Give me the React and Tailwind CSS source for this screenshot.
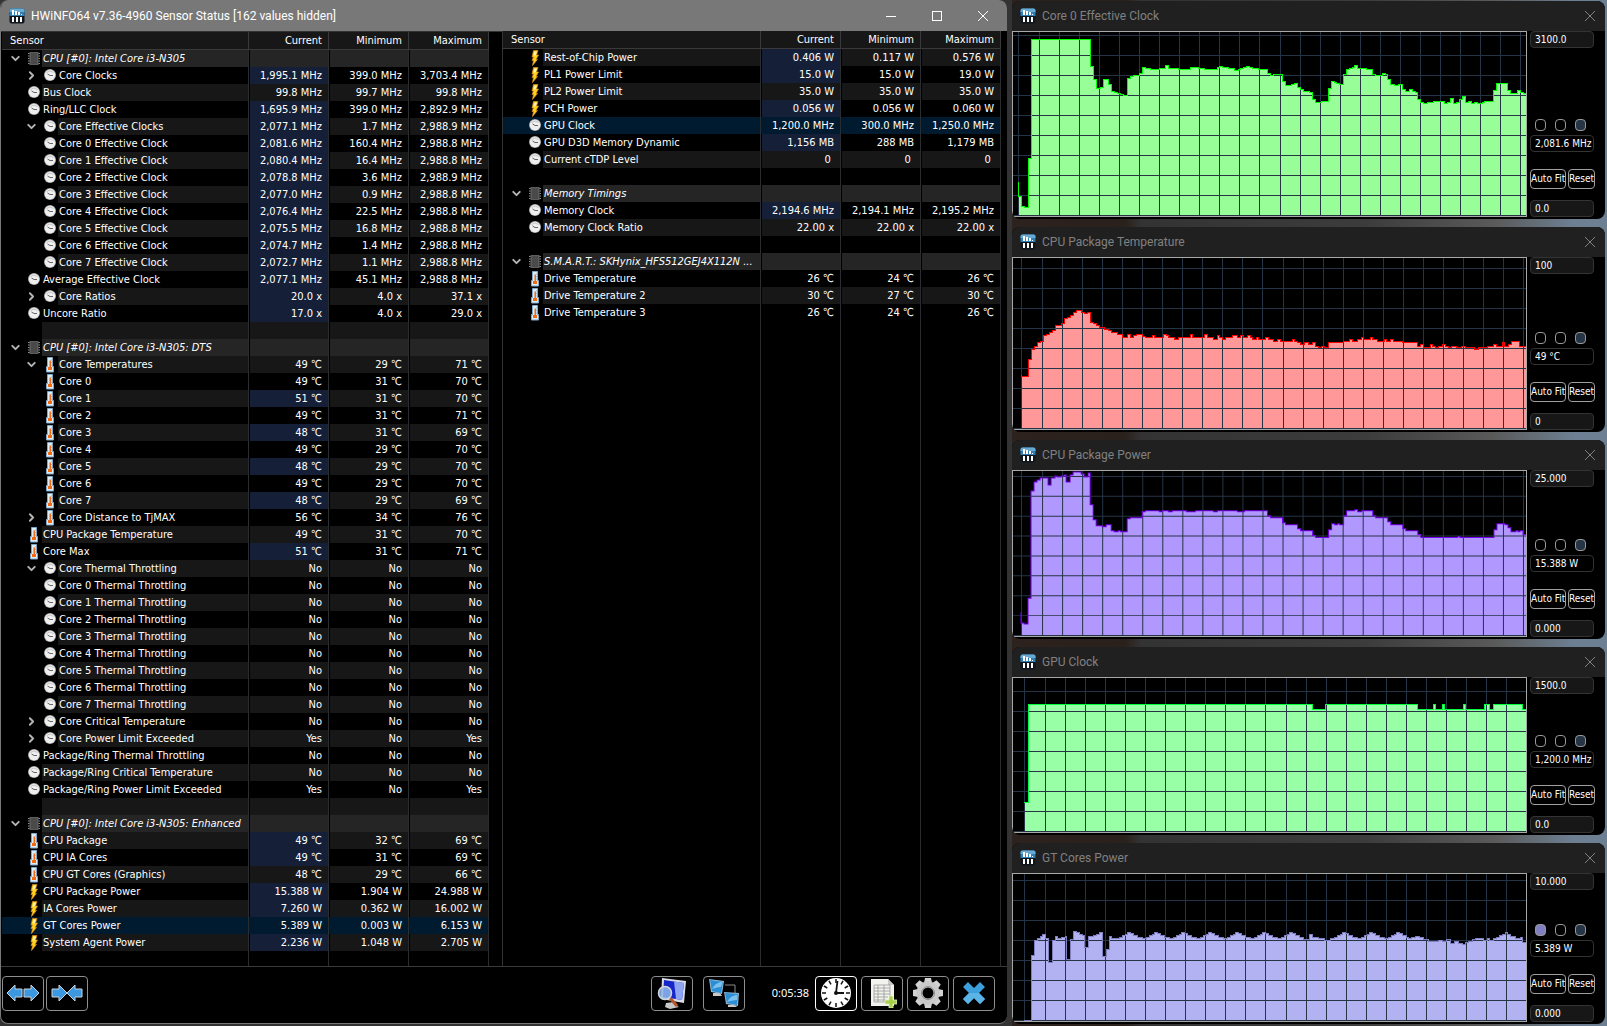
import { ChevronDown, ChevronRight } from "lucide-react";

// icon, label, current, minimum, maximum, options
const leftRows = [
  { head: true, label: "CPU [#0]: Intel Core i3-N305" },
  { icon: "clock", sub: true, arrow: "closed", hot: true, label: "Core Clocks", v: ["1,995.1 MHz", "399.0 MHz", "3,703.4 MHz"] },
  { icon: "clock", label: "Bus Clock", v: ["99.8 MHz", "99.7 MHz", "99.8 MHz"] },
  { icon: "clock", hot: true, label: "Ring/LLC Clock", v: ["1,695.9 MHz", "399.0 MHz", "2,892.9 MHz"] },
  { icon: "clock", sub: true, arrow: "open", hot: true, label: "Core Effective Clocks", v: ["2,077.1 MHz", "1.7 MHz", "2,988.9 MHz"] },
  { icon: "clock", sub: true, hot: true, label: "Core 0 Effective Clock", v: ["2,081.6 MHz", "160.4 MHz", "2,988.8 MHz"] },
  { icon: "clock", sub: true, hot: true, label: "Core 1 Effective Clock", v: ["2,080.4 MHz", "16.4 MHz", "2,988.8 MHz"] },
  { icon: "clock", sub: true, hot: true, label: "Core 2 Effective Clock", v: ["2,078.8 MHz", "3.6 MHz", "2,988.9 MHz"] },
  { icon: "clock", sub: true, hot: true, label: "Core 3 Effective Clock", v: ["2,077.0 MHz", "0.9 MHz", "2,988.8 MHz"] },
  { icon: "clock", sub: true, hot: true, label: "Core 4 Effective Clock", v: ["2,076.4 MHz", "22.5 MHz", "2,988.8 MHz"] },
  { icon: "clock", sub: true, hot: true, label: "Core 5 Effective Clock", v: ["2,075.5 MHz", "16.8 MHz", "2,988.8 MHz"] },
  { icon: "clock", sub: true, hot: true, label: "Core 6 Effective Clock", v: ["2,074.7 MHz", "1.4 MHz", "2,988.8 MHz"] },
  { icon: "clock", sub: true, hot: true, label: "Core 7 Effective Clock", v: ["2,072.7 MHz", "1.1 MHz", "2,988.8 MHz"] },
  { icon: "clock", hot: true, label: "Average Effective Clock", v: ["2,077.1 MHz", "45.1 MHz", "2,988.8 MHz"] },
  { icon: "clock", sub: true, arrow: "closed", hot: true, label: "Core Ratios", v: ["20.0 x", "4.0 x", "37.1 x"] },
  { icon: "clock", hot: true, label: "Uncore Ratio", v: ["17.0 x", "4.0 x", "29.0 x"] },
  {},
  { head: true, label: "CPU [#0]: Intel Core i3-N305: DTS" },
  { icon: "temp", sub: true, arrow: "open", label: "Core Temperatures", v: ["49 ℃", "29 ℃", "71 ℃"] },
  { icon: "temp", sub: true, label: "Core 0", v: ["49 ℃", "31 ℃", "70 ℃"] },
  { icon: "temp", sub: true, hot: true, label: "Core 1", v: ["51 ℃", "31 ℃", "70 ℃"] },
  { icon: "temp", sub: true, label: "Core 2", v: ["49 ℃", "31 ℃", "71 ℃"] },
  { icon: "temp", sub: true, hot: true, label: "Core 3", v: ["48 ℃", "31 ℃", "69 ℃"] },
  { icon: "temp", sub: true, label: "Core 4", v: ["49 ℃", "29 ℃", "70 ℃"] },
  { icon: "temp", sub: true, hot: true, label: "Core 5", v: ["48 ℃", "29 ℃", "70 ℃"] },
  { icon: "temp", sub: true, label: "Core 6", v: ["49 ℃", "29 ℃", "70 ℃"] },
  { icon: "temp", sub: true, hot: true, label: "Core 7", v: ["48 ℃", "29 ℃", "69 ℃"] },
  { icon: "temp", sub: true, arrow: "closed", label: "Core Distance to TjMAX", v: ["56 ℃", "34 ℃", "76 ℃"] },
  { icon: "temp", label: "CPU Package Temperature", v: ["49 ℃", "31 ℃", "70 ℃"] },
  { icon: "temp", hot: true, label: "Core Max", v: ["51 ℃", "31 ℃", "71 ℃"] },
  { icon: "clock", sub: true, arrow: "open", label: "Core Thermal Throttling", v: ["No", "No", "No"] },
  { icon: "clock", sub: true, label: "Core 0 Thermal Throttling", v: ["No", "No", "No"] },
  { icon: "clock", sub: true, label: "Core 1 Thermal Throttling", v: ["No", "No", "No"] },
  { icon: "clock", sub: true, label: "Core 2 Thermal Throttling", v: ["No", "No", "No"] },
  { icon: "clock", sub: true, label: "Core 3 Thermal Throttling", v: ["No", "No", "No"] },
  { icon: "clock", sub: true, label: "Core 4 Thermal Throttling", v: ["No", "No", "No"] },
  { icon: "clock", sub: true, label: "Core 5 Thermal Throttling", v: ["No", "No", "No"] },
  { icon: "clock", sub: true, label: "Core 6 Thermal Throttling", v: ["No", "No", "No"] },
  { icon: "clock", sub: true, label: "Core 7 Thermal Throttling", v: ["No", "No", "No"] },
  { icon: "clock", sub: true, arrow: "closed", label: "Core Critical Temperature", v: ["No", "No", "No"] },
  { icon: "clock", sub: true, arrow: "closed", label: "Core Power Limit Exceeded", v: ["Yes", "No", "Yes"] },
  { icon: "clock", label: "Package/Ring Thermal Throttling", v: ["No", "No", "No"] },
  { icon: "clock", label: "Package/Ring Critical Temperature", v: ["No", "No", "No"] },
  { icon: "clock", label: "Package/Ring Power Limit Exceeded", v: ["Yes", "No", "Yes"] },
  {},
  { head: true, label: "CPU [#0]: Intel Core i3-N305: Enhanced" },
  { icon: "temp", hot: true, label: "CPU Package", v: ["49 ℃", "32 ℃", "69 ℃"] },
  { icon: "temp", hot: true, label: "CPU IA Cores", v: ["49 ℃", "31 ℃", "69 ℃"] },
  { icon: "temp", label: "CPU GT Cores (Graphics)", v: ["48 ℃", "29 ℃", "66 ℃"] },
  { icon: "power", hot: true, label: "CPU Package Power", v: ["15.388 W", "1.904 W", "24.988 W"] },
  { icon: "power", hot: true, label: "IA Cores Power", v: ["7.260 W", "0.362 W", "16.002 W"] },
  { icon: "power", selected: true, label: "GT Cores Power", v: ["5.389 W", "0.003 W", "6.153 W"] },
  { icon: "power", hot: true, label: "System Agent Power", v: ["2.236 W", "1.048 W", "2.705 W"] },
];

const rightRows = [
  { icon: "power", hot: true, label: "Rest-of-Chip Power", v: ["0.406 W", "0.117 W", "0.576 W"] },
  { icon: "power", hot: true, label: "PL1 Power Limit", v: ["15.0 W", "15.0 W", "19.0 W"] },
  { icon: "power", label: "PL2 Power Limit", v: ["35.0 W", "35.0 W", "35.0 W"] },
  { icon: "power", hot: true, label: "PCH Power", v: ["0.056 W", "0.056 W", "0.060 W"] },
  { icon: "clock", selected: true, label: "GPU Clock", v: ["1,200.0 MHz", "300.0 MHz", "1,250.0 MHz"] },
  { icon: "clock", hot: true, label: "GPU D3D Memory Dynamic", v: ["1,156 MB", "288 MB", "1,179 MB"] },
  { icon: "clock", label: "Current cTDP Level", v: ["0\u00a0", "0\u00a0", "0\u00a0"] },
  {},
  { head: true, label: "Memory Timings" },
  { icon: "clock", hot: true, label: "Memory Clock", v: ["2,194.6 MHz", "2,194.1 MHz", "2,195.2 MHz"] },
  { icon: "clock", label: "Memory Clock Ratio", v: ["22.00 x", "22.00 x", "22.00 x"] },
  {},
  { head: true, label: "S.M.A.R.T.: SKHynix_HFS512GEJ4X112N ..." },
  { icon: "temp", label: "Drive Temperature", v: ["26 ℃", "24 ℃", "26 ℃"] },
  { icon: "temp", label: "Drive Temperature 2", v: ["30 ℃", "27 ℃", "30 ℃"] },
  { icon: "temp", label: "Drive Temperature 3", v: ["26 ℃", "24 ℃", "26 ℃"] },
];

// one ripple of the GT power curve, centred on x
const ripple = (x) => [
  [x - 13, 65], [x - 9, 64], [x - 6, 62], [x - 3, 61], [x - 1, 59], [x + 2, 60], [x + 5, 62], [x + 9, 64],
];

const graphs = [
  {
    title: "Core 0 Effective Clock", max: "3100.0", value: "2,081.6 MHz", min: "0.0",
    fill: "#98ff98", stroke: "#00ff00", h: 186, gridX: [6, 27], gridY: 4, spike: 151,
    points: [
      [6, 165], [9, 175], [12, 176], [16, 127], [19, 8], [78, 35], [81, 48], [84, 57], [88, 56], [91, 48], [96, 53],
      [99, 60], [102, 61], [105, 62], [108, 63], [111, 64], [115, 47], [118, 45], [121, 44], [127, 42], [130, 36],
      [133, 37], [138, 38], [147, 37], [153, 34], [156, 37], [166, 38], [178, 36], [186, 37], [192, 38], [205, 36],
      [207, 35], [210, 36], [216, 37], [222, 39], [226, 38], [228, 37], [231, 36], [234, 35], [237, 36], [240, 37],
      [246, 38], [255, 42], [258, 44], [261, 43], [270, 50], [273, 54], [279, 53], [282, 52], [285, 56], [288, 58],
      [291, 60], [297, 61], [300, 68], [303, 71], [309, 70], [316, 57], [319, 50], [322, 51], [324, 52], [327, 53],
      [331, 43], [334, 38], [337, 37], [340, 36], [342, 34], [345, 37], [354, 38], [360, 43], [363, 44], [370, 42],
      [373, 43], [375, 48], [378, 53], [382, 54], [386, 53], [390, 58], [393, 60], [397, 58], [400, 60], [403, 61],
      [405, 68], [408, 71], [411, 72], [415, 71], [421, 70], [432, 72], [435, 71], [438, 67], [441, 72], [444, 71],
      [447, 68], [450, 65], [453, 71], [456, 70], [459, 72], [462, 71], [465, 72], [470, 71], [472, 70], [481, 59],
      [484, 52], [495, 59], [498, 62], [505, 59], [508, 61], [511, 62],
    ],
  },
  {
    title: "CPU Package Temperature", max: "100", value: "49 °C", min: "0",
    fill: "#ff9898", stroke: "#ff0000", h: 173, gridX: [9, 30], gridY: 11, spike: 118,
    points: [
      [9, 119], [16, 102], [19, 92], [22, 89], [25, 85], [28, 84], [31, 78], [34, 77], [37, 75], [40, 73], [43, 68],
      [49, 66], [52, 61], [55, 60], [58, 58], [61, 55], [64, 53], [69, 55], [72, 56], [75, 55], [78, 65], [81, 66],
      [84, 68], [87, 70], [92, 72], [96, 73], [99, 75], [105, 77], [110, 80], [115, 77], [118, 80], [121, 78],
      [124, 77], [130, 79], [133, 80], [140, 78], [142, 80], [151, 77], [154, 78], [156, 80], [162, 82], [166, 80],
      [178, 77], [180, 80], [192, 77], [195, 80], [201, 82], [205, 78], [207, 80], [210, 82], [213, 80], [220, 78],
      [225, 80], [228, 78], [231, 80], [235, 78], [238, 80], [240, 82], [244, 80], [246, 82], [253, 80], [256, 82],
      [261, 84], [265, 82], [268, 84], [280, 82], [282, 84], [285, 85], [288, 87], [292, 85], [296, 87], [300, 85],
      [303, 89], [306, 90], [309, 89], [312, 90], [316, 85], [331, 84], [337, 82], [340, 84], [345, 82], [349, 80],
      [351, 82], [358, 80], [360, 82], [365, 84], [372, 82], [374, 84], [378, 82], [381, 84], [390, 85], [405, 89],
      [408, 87], [411, 90], [418, 87], [420, 89], [423, 90], [426, 89], [430, 87], [433, 89], [436, 90], [439, 89],
      [444, 90], [449, 89], [453, 90], [462, 92], [466, 90], [475, 89], [481, 87], [484, 89], [490, 85], [492, 89],
      [496, 87], [499, 84], [507, 89],
    ],
  },
  {
    title: "CPU Package Power", max: "25.000", value: "15.388 W", min: "0.000",
    fill: "#b198ff", stroke: "#7a00f0", h: 168, gridX: [9, 30], gridY: 6, spike: 143,
    points: [
      [9, 154], [12, 155], [16, 129], [19, 21], [22, 12], [25, 10], [28, 8], [36, 15], [39, 8], [43, 6], [45, 7],
      [49, 6], [52, 5], [54, 12], [58, 5], [61, 2], [69, 4], [72, 7], [76, 3], [78, 35], [81, 50], [84, 56], [90, 57],
      [94, 55], [99, 61], [102, 62], [106, 61], [108, 62], [115, 49], [118, 48], [130, 42], [133, 41], [147, 42],
      [150, 41], [156, 42], [160, 41], [174, 42], [183, 41], [201, 42], [205, 41], [225, 42], [232, 41], [255, 46],
      [258, 48], [270, 53], [273, 55], [285, 59], [288, 61], [300, 66], [303, 68], [316, 60], [319, 54], [322, 55],
      [325, 54], [327, 55], [331, 46], [334, 41], [342, 40], [345, 42], [349, 41], [360, 46], [363, 48], [375, 52],
      [378, 55], [390, 59], [393, 61], [405, 65], [408, 68], [445, 67], [447, 68], [481, 60], [484, 54], [492, 55],
      [495, 58], [498, 62], [503, 61], [505, 62], [507, 61], [510, 65],
    ],
  },
  {
    title: "GPU Clock", max: "1500.0", value: "1,200.0 MHz", min: "0.0",
    fill: "#98ffa6", stroke: "#00ff3c", h: 156, gridX: [12, 33], gridY: 14, spike: 125,
    points: [
      [12, 125], [16, 27], [300, 32], [313, 27], [405, 32], [421, 27], [423, 32], [430, 27], [432, 32], [451, 27],
      [453, 32], [472, 27], [477, 32], [481, 27], [510, 32],
    ],
  },
  {
    title: "GT Cores Power", max: "10.000", value: "5.389 W", min: "0.000",
    fill: "#b2b2f3", stroke: "#8080c0", h: 149, gridX: [12, 33], gridY: 7, spike: 147, swatch: true,
    points: [
      [12, 147], [19, 82], [22, 67], [25, 65], [28, 63], [30, 61], [33, 65], [36, 89], [40, 67], [43, 63], [45, 65],
      [49, 64], [53, 63], [54, 86], [58, 66], [61, 58], [64, 59], [67, 61], [70, 62], [72, 74], [76, 63], [81, 62],
      [84, 61], [87, 59], [90, 83], [94, 76], [97, 63], [99, 65],
      ...[116, 143, 170, 197, 224, 251, 278].flatMap(ripple),
      [291, 66], [297, 61], [300, 64], [306, 65], [312, 67],
      ...[331, 358, 385].flatMap(ripple),
      [396, 65], [399, 64], [403, 63], [407, 64], [411, 66], [416, 68], [426, 67], [430, 68], [434, 66], [438, 70],
      [442, 68], [446, 70], [450, 71], [453, 69], [456, 68], [460, 66], [463, 65], [471, 67], [475, 65], [477, 67],
      [481, 65], [484, 64], [487, 62], [490, 61], [493, 59], [495, 61], [498, 63], [503, 65], [508, 64], [510, 69],
    ],
  },
];

const AppIcon = () => (
  <svg viewBox="0 0 16 16" className="h-4 w-4 shrink-0">
    <rect x="0.5" y="0.5" width="15" height="15" rx="2" fill="#10161c" />
    <path d="M2.500 .5h11a2 2 0 0 1 2 2V8H.5V2.500a2 2 0 0 1 2-2Z" fill="#2f7fb4" />
    <path d="M2.500 .5h11a2 2 0 0 1 2 2V4H.5V2.500a2 2 0 0 1 2-2Z" fill="#67a9d0" />
    <path d="M3 2h2v5H3zM6 3h2v4H6zM9 4h2v3H9zM12 6h1v1h-1zM3 9h2v5H3zM7 9h2v5H7zM11 9h2v5h-2z" fill="#fff" />
  </svg>
);

const ChipIcon = () => (
  <svg viewBox="0 0 14 16" className="h-4 w-3.5">
    <rect x="2.500" y="1" width="9" height="13" fill="#5c5c5c" />
    <path d="M4 2h6v11H4z" fill="#4a4a4a" />
    <path d="M1 2.500h12M1 5h12M1 7.500h12M1 10h12M1 12.500h12" stroke="#909090" strokeDasharray="1.500 9 1.500" />
  </svg>
);

const ClockIcon = () => (
  <svg viewBox="0 0 14 16" className="h-4 w-3.500 w-3.5">
    <circle cx="7" cy="7" r="6" fill="#a8a8a8" />
    <circle cx="7" cy="7" r="5.200" fill="#efefef" />
    <path d="M4.500 6 7 7.500h3" stroke="#666" fill="none" />
    <path d="M3.500 4.500 7 3l3.500 1.500" stroke="#c4c4c4" fill="none" />
  </svg>
);

const TempIcon = () => (
  <svg viewBox="0 0 12 16" className="h-4 w-3">
    <path d="M3.500 .5h5v9h1v5.500h-7V9.500h1z" fill="#dcedf8" stroke="#7fa8c8" />
    <path d="M5.500 3.500h1.500V10H8v3H4v-3h1.500z" fill="#f26a12" />
    <path d="M7 3h1M7 5.500h1M7 8h1" stroke="#86b8da" />
  </svg>
);

const PowerIcon = () => (
  <svg viewBox="0 0 12 16" className="h-4 w-3">
    <path d="M4.500 .5h4.500L7.500 5h2L7 9.500h1.500L3.500 15.500l1-5H3L4.500 7H3z" fill="#ffd21c" stroke="#d98a1c" strokeWidth=".7" />
    <path d="M5.500 1.500H8L6.500 5.500H4.500z" fill="#fff4b0" />
  </svg>
);

const icons = { clock: ClockIcon, temp: TempIcon, power: PowerIcon };

const SensorName = ({ row, stripe }) => {
  const Icon = row.head ? ChipIcon : icons[row.icon];
  const arrow = row.head ? "open" : row.arrow;
  return (
    <div className="flex h-[17px] items-stretch overflow-hidden">
      <span className={`flex shrink-0 items-center justify-end pr-1 ${row.sub ? "w-10" : "w-6"}`}>
        {arrow === "open" && <ChevronDown size={13} strokeWidth={3.500} className="text-[#b5b5b5]" />}
        {arrow === "closed" && <ChevronRight size={13} strokeWidth={3.500} className="text-[#b5b5b5]" />}
      </span>
      <span className="flex w-4 shrink-0 items-center justify-center">{Icon && <Icon />}</span>
      <span className={`min-w-0 flex-1 whitespace-nowrap pl-px ${stripe} ${row.head ? "italic" : ""}`}>
        {row.label}
      </span>
    </div>
  );
};

const SensorTable = ({ rows, name }) => (
  <table
    aria-label={name}
    className="h-full w-full table-fixed border-separate border-spacing-0 font-['DejaVu_Sans_Condensed','Noto_Sans_CJK_SC',sans-serif] text-[11px] leading-[17px] text-white"
  >
    <colgroup>
      <col />
      <col className="w-20" />
      <col className="w-20" />
      <col className="w-20" />
    </colgroup>
    <thead>
      <tr className="h-[18px] bg-[#171717]">
        <th className="border-r border-b border-[#3a3a3a] p-0 pl-2 text-left font-normal">Sensor</th>
        {["Current", "Minimum", "Maximum"].map((h) => (
          <th key={h} className="border-r border-b border-[#3a3a3a] p-0 pr-1.5 text-right font-normal">
            {h}
          </th>
        ))}
      </tr>
    </thead>
    <tbody>
      {rows.map((row, i) => {
        let stripe = i % 2 === 0 ? "bg-[#171717]" : "bg-black";
        if (row.head) stripe = "bg-[#252525]";
        if (row.selected) stripe = "bg-[#001b30]";
        return (
          <tr key={i} className={`h-[17px] ${row.selected ? "bg-[#001b30]" : "bg-black"}`}>
            <td className="border-r border-[#2a2d30] p-0">
              <SensorName row={row} stripe={stripe} />
            </td>
            {[0, 1, 2].map((n) => (
              <td
                key={n}
                className={`whitespace-nowrap border-r border-r-[#2a2d30] border-l p-0 pr-1.5 text-right ${row.selected ? "border-l-[#001b30]" : "border-l-black"
                  } ${row.hot && n === 0 ? "bg-[#152038]" : stripe}`}
              >
                {row.v ? row.v[n] : ""}
              </td>
            ))}
          </tr>
        );
      })}
      {/* rest of the grid below the last sensor */}
      <tr className="h-full">
        {[0, 1, 2, 3].map((n) => (
          <td key={n} className="border-r border-[#2a2d30] p-0"></td>
        ))}
      </tr>
    </tbody>
  </table>
);

const ToolButton = ({ label, active, children }) => (
  <button
    aria-label={label}
    className={`flex h-[35px] w-[42px] items-center justify-center rounded border bg-black ${active ? "border-white" : "border-[#8e8e8e]"}`}
  >
    {children}
  </button>
);

const ArrowsOut = () => (
  <svg viewBox="0 0 34 20" className="h-5 w-[34px]" fill="#3a97e0" stroke="#c9d3da" strokeWidth="1">
    <path d="M1 10 9 2v4h7v8H9v4zM33 10l-8-8v4h-7v8h7v4z" />
  </svg>
);

const ArrowsIn = () => (
  <svg viewBox="0 0 34 20" className="h-5 w-[34px]" fill="#3a97e0" stroke="#c9d3da" strokeWidth="1">
    <path d="M17 10 9 2v4H2v8h7v4zM17 10l8-8v4h7v8h-7v4z" />
  </svg>
);

const ScreenSearch = () => (
  <svg viewBox="0 0 32 32" className="h-8 w-8">
    <path d="M10 26l8-1 1 3 4 2-9 2-5-2z" fill="#c8c8c8" />
    <path d="M6 1 30 4 28 26 5 22z" fill="#d9dce4" />
    <path d="M8 3 28 6 26 23 7 20z" fill="#1626c8" />
    <path d="M18 4.500 28 6 26 23 20 22z" fill="#8ea6f2" />
    <path d="M14 21 21 29" stroke="#b5562a" strokeWidth="3" />
    <circle cx="9" cy="16" r="6.500" fill="#8fb9ea" fillOpacity=".85" stroke="#cfd6de" strokeWidth="1.500" />
  </svg>
);

const Network = () => (
  <svg viewBox="0 0 32 30" className="h-[30px] w-8">
    <path d="M17 7h10v8" fill="none" stroke="#8a8a8a" />
    <path d="M5 15h7l2 3H5z" fill="#c9c9c9" />
    <path d="M1 1 16 3 14 16 3 14z" fill="#8fb6d2" />
    <path d="M2 2 15 4 13 15 4 13z" fill="#2b8fd6" />
    <path d="M4 11c3-5 6-7 10.500-7L13 9c-4 0-6 1-9 2z" fill="#7cc0ee" />
    <path d="M20 27h7l2 2h-9z" fill="#c9c9c9" />
    <path d="M16 14 31 15 30 28 18 26z" fill="#8fb6d2" />
    <path d="M17 15 30 16 29 27 19 25z" fill="#2b8fd6" />
    <path d="M19 24c3-5 6-7 10.500-7L29 22c-4 0-6 1-10 2z" fill="#7cc0ee" />
  </svg>
);

const BigClock = () => (
  <svg viewBox="0 0 32 32" className="h-8 w-8">
    <circle cx="16" cy="16" r="15" fill="#fff" />
    {[0, 30, 60, 90, 120, 150, 180, 210, 240, 270, 300, 330].map((a) => (
      <path key={a} d="M16 2v4" stroke="#111" strokeWidth="1.500" transform={`rotate(${a} 16 16)`} />
    ))}
    <path d="M16 16 17.500 4M16 16h8" stroke="#111" strokeWidth="1.800" fill="none" />
    <circle cx="16" cy="16" r="2" fill="#111" />
  </svg>
);

const SheetAdd = () => (
  <svg viewBox="0 0 30 30" className="h-[30px] w-[30px]">
    <path d="M4 1h17l6 6v21H4z" fill="#f2f2ee" />
    <path d="M21 1v6h6z" fill="#c9c9c4" />
    <path d="M7 7h16v17H7zM7 10h16M7 13h16M7 16h16M7 19h14M7 22h12M11 7v17M17 7v17" stroke="#9a9a96" strokeWidth=".8" fill="none" />
    <path d="M22 18h4v4h4v4h-4v4h-4v-4h-4v-4h4z" fill="#a6cf4e" stroke="#e4f2c0" strokeWidth=".8" />
  </svg>
);

const Gear = () => (
  <svg viewBox="0 0 32 32" className="h-8 w-8">
    {[0, 45, 90, 135, 180, 225, 270, 315].map((a) => (
      <path key={a} d="M12 6 13 1h6l1 5z" fill="#d2d2d2" transform={`rotate(${a} 16 16)`} />
    ))}
    <circle cx="16" cy="16" r="8.500" fill="none" stroke="#cacaca" strokeWidth="6" />
    <circle cx="16" cy="16" r="6.500" fill="none" stroke="#8c8c8c" />
  </svg>
);

const BlueCross = () => (
  <svg viewBox="0 0 24 24" className="h-6 w-6">
    <path d="M6 1 12 7 18 1 23 6 17 12 23 18 18 23 12 17 6 23 1 18 7 12 1 6z" fill="#3d9fdc" />
    <path d="M7 12h10l6 6-5 5-6-6-6 6-5-5z" fill="#5bb4e8" />
  </svg>
);

const CloseGlyph = () => (
  <svg viewBox="0 0 12 12" className="h-3 w-3" stroke="currentColor" fill="none">
    <path d="M1 1 11 11M11 1 1 11" />
  </svg>
);

const Graph = ({ graph }) => {
  const { points, h, gridX, gridY, spike } = graph;
  const line = points.map(([x, y]) => `H${x}V${y}`).join("") + "H514";
  const top = `M${points[0][0]} ${spike}${line}`;
  const cols = [gridX[0]];
  for (let x = gridX[1]; x < 514; x += 20) cols.push(x);
  const rows = [];
  for (let y = gridY; y < h; y += 20) rows.push(y);
  return (
    <svg
      viewBox={`1 1 512 ${h - 2}`}
      preserveAspectRatio="none"
      shapeRendering="crispEdges"
      className="block h-0 min-h-full w-full"
    >
      <path d={`M${points[0][0]} ${h}V${points[0][1]}${line}V${h}Z`} fill={graph.fill} />
      <path
        d={cols.map((x) => `M${x + 0.5} 0V${h}`).join("") + rows.map((y) => `M0 ${y + 0.5}H514`).join("")}
        stroke="#263545"
      />
      <path d={top} fill="none" stroke={graph.stroke} />
    </svg>
  );
};

const GraphWindow = ({ graph }) => {
  const field = "h-[17px] w-16 rounded-sm border border-[#333] pl-1 text-[10px] leading-[15px] text-white";
  const push = "h-5 overflow-hidden whitespace-nowrap rounded border border-[#a0a0a0] bg-black text-[10px] leading-[18px] text-white";
  return (
    <section className="flex min-h-0 flex-col overflow-hidden rounded-lg bg-black">
      <header className="flex h-[30px] shrink-0 items-center bg-[#202020] pl-2 font-[Roboto,sans-serif] text-xs text-[#808080]">
        <AppIcon />
        <h2 className="flex-1 pl-1.5">{graph.title}</h2>
        <button aria-label={`Close ${graph.title}`} className="flex h-full w-[30px] items-center justify-center">
          <CloseGlyph />
        </button>
      </header>
      <div className="flex min-h-0 flex-1 pb-0.5 font-['DejaVu_Sans_Condensed',sans-serif]">
        <div className="min-w-0 flex-1 border border-[#a8a8a8] bg-black">
          <Graph graph={graph} />
        </div>
        <div className="flex w-[78px] shrink-0 flex-col justify-between pl-[3px]">
          <input aria-label={`${graph.title} upper limit`} defaultValue={graph.max} className={`${field} bg-[#171717]`} />
          <div>
            <div className="flex gap-[9px] pb-1 pl-[5px]">
              <button
                aria-label="Line colour"
                className={`h-3 w-[11px] rounded border border-[#999] ${graph.swatch ? "bg-[#8080c0]" : "bg-black"}`}
              ></button>
              <button aria-label="Background colour" className="h-3 w-[11px] rounded border border-[#999] bg-black"></button>
              <button aria-label="Grid colour" className="h-3 w-[11px] rounded border border-[#999] bg-[#263545]"></button>
            </div>
            <input aria-label={`${graph.title} value`} readOnly defaultValue={graph.value} className={`${field} block bg-black`} />
            <div className="flex gap-0.5 pt-[17px] pb-[11px]">
              <button className={`${push} w-9`}>Auto Fit</button>
              <button className={`${push} w-[27px]`}>Reset</button>
            </div>
            <input aria-label={`${graph.title} lower limit`} defaultValue={graph.min} className={`${field} block bg-[#171717]`} />
          </div>
        </div>
      </div>
    </section>
  );
};

const App = () => {
  return (
    <div className="grid min-h-screen grid-cols-[1007fr_600fr] bg-[linear-gradient(90deg,#333_0%,#333_63%,#2d221d_63%,#2a201c_70%,#333_71%,#3c3c3c_85%,#5a5a5a_93%,#6d8093_98%,#6d8093_100%)]">
      {/* ================= Sensor window ================= */}
      <main className="mb-0.5 flex flex-col overflow-hidden rounded-lg border-b border-l border-[#777] bg-black">
        <header className="flex h-[31px] shrink-0 items-center bg-[#787878] pr-px pl-2 font-[Roboto,sans-serif] text-xs text-white">
          <AppIcon />
          <h1 className="flex-1 pl-1.5">HWiNFO64 v7.36-4960 Sensor Status [162 values hidden]</h1>
          <button aria-label="Minimize" className="flex h-full w-[46px] items-center justify-center">
            <svg viewBox="0 0 12 12" className="h-3 w-3" stroke="currentColor">
              <path d="M1 6.500h10" />
            </svg>
          </button>
          <button aria-label="Maximize" className="flex h-full w-[46px] items-center justify-center">
            <svg viewBox="0 0 12 12" className="h-3 w-3" stroke="currentColor" fill="none">
              <rect x="1.500" y="1.500" width="9" height="9" />
            </svg>
          </button>
          <button aria-label="Close" className="flex h-full w-[46px] items-center justify-center">
            <CloseGlyph />
          </button>
        </header>

        <div className="grid flex-1 grid-cols-[502fr_504fr] border-b border-[#3a3a3a]">
          <div className="border-t border-r border-[#333] pr-[13px] pl-px">
            <SensorTable rows={leftRows} name="CPU sensors" />
          </div>
          <div className="pr-1.5">
            <SensorTable rows={rightRows} name="Memory and drive sensors" />
          </div>
        </div>

        <footer className="flex h-14 shrink-0 items-center gap-0.5 pr-3 pb-1 pl-px">
          <ToolButton label="Expand columns"><ArrowsOut /></ToolButton>
          <ToolButton label="Shrink columns"><ArrowsIn /></ToolButton>
          <div className="ml-auto flex items-center gap-2.5">
            <ToolButton label="Summary"><ScreenSearch /></ToolButton>
            <ToolButton label="Remote"><Network /></ToolButton>
          </div>
          <time className="w-[66px] pr-1 text-right font-['Noto_Sans',sans-serif] text-[11px] text-white">0:05:38</time>
          <div className="flex items-center gap-1">
            <ToolButton label="Reset timer" active><BigClock /></ToolButton>
            <ToolButton label="Start logging"><SheetAdd /></ToolButton>
            <ToolButton label="Settings"><Gear /></ToolButton>
            <ToolButton label="Close sensors"><BlueCross /></ToolButton>
          </div>
        </footer>
      </main>

      {/* ================= Graph windows ================= */}
      <aside className="grid grid-rows-[218fr_205fr_199fr_188fr_181fr] gap-2 pt-px pr-0.5 pb-0.5 pl-[5px]">
        {graphs.map((g) => (
          <GraphWindow key={g.title} graph={g} />
        ))}
      </aside>
    </div>
  );
};

export default App;
